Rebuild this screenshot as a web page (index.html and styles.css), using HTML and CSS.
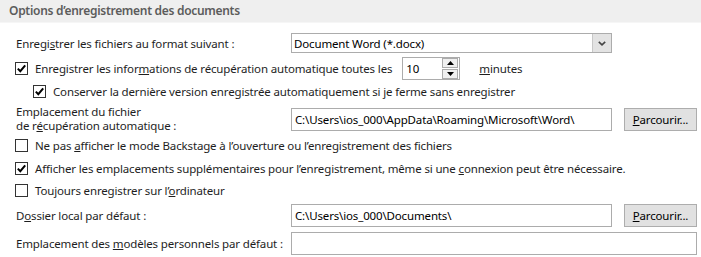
FILE: index.html
```html
<!DOCTYPE html>
<html lang="fr">
<head>
  <meta charset="UTF-8" />
  <title>Options d'enregistrement</title>
  <link rel="stylesheet" href="styles.css">
</head>
<body>
  <div class="section-title">Options d’enregistrement des documents</div>

  <div class="options">
    <!-- format -->
    <div class="row row-format">
      <span class="label">Enregi<u>s</u>trer les fichiers au format suivant :</span>
      <div class="select">
        <span class="select-text">Document Word (*.docx)</span>
        <span class="select-arrow">
          <svg width="8" height="5" viewBox="0 0 8 5"><path d="M0.8 0.8 L4 3.8 L7.2 0.8" fill="none" stroke="#444" stroke-width="1.6"/></svg>
        </span>
      </div>
    </div>

    <!-- autosave -->
    <div class="row row-autosave">
      <span class="check checked">
        <svg width="11" height="11" viewBox="0 0 11 11"><path d="M1.8 5.6 L4.3 8.2 L9.2 2.4" fill="none" stroke="#000" stroke-width="2"/></svg>
      </span>
      <span class="check-text">Enregistrer les infor<u>m</u>ations de récupération automatique toutes les</span>
      <div class="spin">
        <span class="spin-value">10</span>
        <span class="spin-buttons">
          <span class="spin-btn"><svg width="7" height="4" viewBox="0 0 7 4"><path d="M0 4 L3.5 0 L7 4 Z" fill="#000"/></svg></span>
          <span class="spin-btn"><svg width="7" height="4" viewBox="0 0 7 4"><path d="M0 0 L3.5 4 L7 0 Z" fill="#000"/></svg></span>
        </span>
      </div>
      <span class="unit"><u>m</u>inutes</span>
    </div>

    <div class="row row-keep">
      <span class="check checked">
        <svg width="11" height="11" viewBox="0 0 11 11"><path d="M1.8 5.6 L4.3 8.2 L9.2 2.4" fill="none" stroke="#000" stroke-width="2"/></svg>
      </span>
      <span class="check-text">Conserver la dernière version enregistrée automatiquement si je ferme sans enregistrer</span>
    </div>

    <!-- autorecover location -->
    <div class="row row-path">
      <span class="label label-two">Emplacement du fichier<br>de r<u>é</u>cupération automatique :</span>
      <div class="field">C:\Users\ios_000\AppData\Roaming\Microsoft\Word\</div>
      <button class="browse"><u>P</u>arcourir...</button>
    </div>

    <div class="row row-check row-backstage">
      <span class="check"></span>
      <span class="check-text">Ne pas <u>a</u>fficher le mode Backstage à l’ouverture ou l’enregistrement des fichiers</span>
    </div>

    <div class="row row-check row-places">
      <span class="check checked">
        <svg width="11" height="11" viewBox="0 0 11 11"><path d="M1.8 5.6 L4.3 8.2 L9.2 2.4" fill="none" stroke="#000" stroke-width="2"/></svg>
      </span>
      <span class="check-text">Afficher les emplacements supplémentaires pour l’enregistrement, même si une <u>c</u>onnexion peut être nécessaire.</span>
    </div>

    <div class="row row-check row-local">
      <span class="check"></span>
      <span class="check-text">Toujours enregistrer sur l’<u>o</u>rdinateur</span>
    </div>

    <!-- folders -->
    <div class="row row-folder">
      <span class="label">D<u>o</u>ssier local par défaut :</span>
      <div class="field">C:\Users\ios_000\Documents\</div>
      <button class="browse"><u>P</u>arcourir...</button>
    </div>

    <div class="row row-templates">
      <span class="label">Emplacement des <u>m</u>odèles personnels par défaut :</span>
      <div class="field field-wide"></div>
    </div>
  </div>
</body>
</html>
```

FILE: styles.css
```css
* { margin: 0; padding: 0; box-sizing: border-box; }

body {
  font-family: 'Noto Sans', 'Open Sans', sans-serif;
  font-size: 11.5px;
  letter-spacing: -0.15px;
  color: #1e1e1e;
  background: #fff;
  width: 701px;
  height: 257px;
  overflow: hidden;
}

u {
  text-decoration: underline;
  text-underline-offset: 1px;
}

.section-title {
  height: 23px;
  line-height: 22px;
  padding-left: 9px;
  background: #efefef;
  border-bottom: 1px solid #f6f6f6;
  color: #5c5c5c;
  font-size: 12px;
  font-weight: 600;
  letter-spacing: -0.3px;
}

.options {
  display: flex;
  flex-direction: column;
  padding-left: 16px;
}

.row {
  display: flex;
  align-items: center;
}

.label {
  width: 275px;
  flex-shrink: 0;
  white-space: nowrap;
}

.label-two {
  line-height: 14px;
}

/* vertical rhythm of the rows */
.row-format { margin-top: 10px; height: 20px; }
.row-autosave { margin-top: 4px; height: 23px; }
.row-keep { margin-top: 1px; height: 20px; padding-left: 18px; }
.row-path { margin-top: 3px; height: 30px; }
.row-backstage { margin-top: 3px; height: 16px; }
.row-places { margin-top: 7px; height: 16px; }
.row-local { margin-top: 6px; height: 16px; }
.row-folder { margin-top: 6px; height: 23px; }
.row-templates { margin-top: 5px; height: 23px; }

/* dropdown */
.select {
  width: 321px;
  height: 20px;
  border: 1px solid #acacac;
  display: flex;
  align-items: center;
  background: #fff;
}

.select-text {
  flex: 1;
  padding-left: 2px;
  color: #000;
}

.select-arrow {
  width: 19px;
  height: 18px;
  background: #e3e3e3;
  border-left: 1px solid #c8c8c8;
  display: flex;
  align-items: center;
  justify-content: center;
}

/* checkboxes */
.check {
  width: 13px;
  height: 13px;
  border: 1px solid #333;
  background: #fff;
  flex-shrink: 0;
  display: flex;
  align-items: center;
  justify-content: center;
  margin-left: -1px;
}

.check-text {
  margin-left: 7px;
  white-space: nowrap;
}

/* spin box */
.spin {
  margin-left: 10px;
  width: 58px;
  height: 23px;
  border: 1px solid #acacac;
  display: flex;
  align-items: center;
  justify-content: space-between;
}

.spin-value {
  padding-left: 3px;
  color: #000;
}

.spin-buttons {
  display: flex;
  flex-direction: column;
  gap: 1px;
  margin-right: 1px;
}

.spin-btn {
  width: 16px;
  height: 10px;
  background: #f0f0f0;
  border: 1px solid #acacac;
  display: flex;
  align-items: center;
  justify-content: center;
}

.unit {
  margin-left: 19px;
}

/* text fields and buttons */
.field {
  width: 321px;
  height: 23px;
  line-height: 21px;
  border: 1px solid #acacac;
  padding-left: 3px;
  color: #000;
  white-space: nowrap;
  overflow: hidden;
}

.field-wide {
  width: 406px;
}

.browse {
  margin-left: 12px;
  width: 73px;
  height: 23px;
  font-family: inherit;
  font-size: 11.5px;
  letter-spacing: -0.15px;
  color: #000;
  background: #e1e1e1;
  border: 1px solid #adadad;
}
```
